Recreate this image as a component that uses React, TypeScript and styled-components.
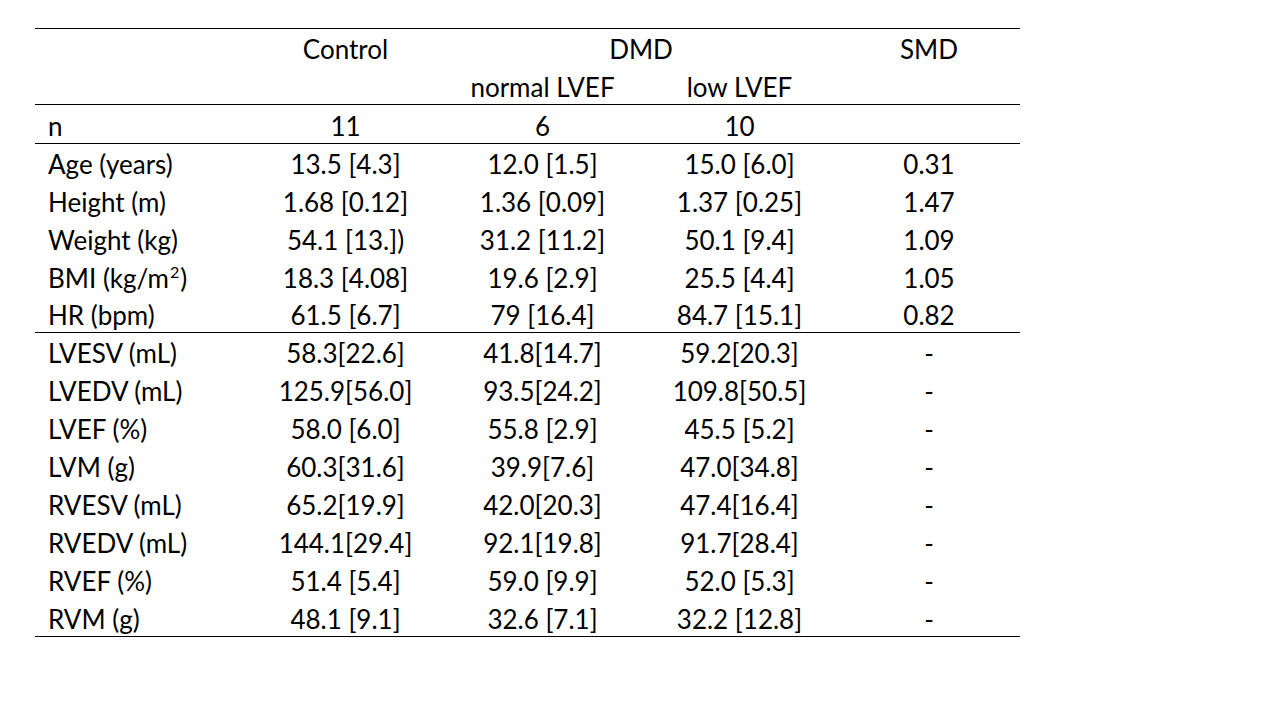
import React from "react";
import styled, { createGlobalStyle } from "styled-components";

const GlobalStyle = createGlobalStyle`
  html, body {
    margin: 0;
    padding: 0;
    background: #fff;
  }
  body {
    font-family: Lato, "Open Sans", "Liberation Sans", sans-serif;
    color: #000;
  }
`;

const Page = styled.div`
  padding: 28px 0 0 35px;
`;

const Table = styled.table`
  width: 985px;
  border-collapse: collapse;
  border-top: 1px solid #000;
  font-size: 26px;
  line-height: 1;
  table-layout: fixed;
`;

const Row = styled.tr<{ ruled?: boolean; h?: number }>`
  height: ${(p) => p.h ?? 38}px;
  border-bottom: ${(p) => (p.ruled ? "1px solid #000" : "none")};
`;

const Label = styled.td`
  padding: 3px 0 0 13px;
  text-align: left;
  white-space: nowrap;
`;

const Cell = styled.td`
  padding: 3px 0 0;
  text-align: center;
  white-space: nowrap;
`;

const Sup = styled.span`
  font-size: 0.62em;
  position: relative;
  top: -0.62em;
  margin: 0 1px;
`;

type DataRow = { label: React.ReactNode; values: string[]; smd: string };

const baseline: DataRow[] = [
  { label: "Age (years)", values: ["13.5 [4.3]", "12.0 [1.5]", "15.0 [6.0]"], smd: "0.31" },
  { label: "Height (m)", values: ["1.68 [0.12]", "1.36 [0.09]", "1.37 [0.25]"], smd: "1.47" },
  { label: "Weight (kg)", values: ["54.1 [13.])", "31.2 [11.2]", "50.1 [9.4]"], smd: "1.09" },
  {
    label: (
      <>
        BMI (kg/m<Sup>2</Sup>)
      </>
    ),
    values: ["18.3 [4.08]", "19.6 [2.9]", "25.5 [4.4]"],
    smd: "1.05",
  },
  { label: "HR (bpm)", values: ["61.5 [6.7]", "79 [16.4]", "84.7 [15.1]"], smd: "0.82" },
];

const cardiac: DataRow[] = [
  { label: "LVESV (mL)", values: ["58.3[22.6]", "41.8[14.7]", "59.2[20.3]"], smd: "-" },
  { label: "LVEDV (mL)", values: ["125.9[56.0]", "93.5[24.2]", "109.8[50.5]"], smd: "-" },
  { label: "LVEF (%)", values: ["58.0 [6.0]", "55.8 [2.9]", "45.5 [5.2]"], smd: "-" },
  { label: "LVM (g)", values: ["60.3[31.6]", "39.9[7.6]", "47.0[34.8]"], smd: "-" },
  { label: "RVESV (mL)", values: ["65.2[19.9]", "42.0[20.3]", "47.4[16.4]"], smd: "-" },
  { label: "RVEDV (mL)", values: ["144.1[29.4]", "92.1[19.8]", "91.7[28.4]"], smd: "-" },
  { label: "RVEF (%)", values: ["51.4 [5.4]", "59.0 [9.9]", "52.0 [5.3]"], smd: "-" },
  { label: "RVM (g)", values: ["48.1 [9.1]", "32.6 [7.1]", "32.2 [12.8]"], smd: "-" },
];

// last row of a block carries the rule; the baseline block is a pixel shorter
const renderRows = (rows: DataRow[], lastHeight = 38) =>
  rows.map((r, i) => {
    const last = i === rows.length - 1;
    return (
      <Row key={i} ruled={last} h={last ? lastHeight : 38}>
        <Label>{r.label}</Label>
        {r.values.map((v, j) => (
          <Cell key={j}>{v}</Cell>
        ))}
        <Cell>{r.smd}</Cell>
      </Row>
    );
  });

export default function App() {
  return (
    <Page>
      <GlobalStyle />
      <Table>
        <colgroup>
          <col style={{ width: 212 }} />
          <col style={{ width: 197 }} />
          <col style={{ width: 197 }} />
          <col style={{ width: 197 }} />
          <col style={{ width: 182 }} />
        </colgroup>
        <thead>
          <Row>
            <Label />
            <Cell>Control</Cell>
            <Cell colSpan={2}>DMD</Cell>
            <Cell>SMD</Cell>
          </Row>
          <Row ruled>
            <Label />
            <Cell />
            <Cell>normal LVEF</Cell>
            <Cell>low LVEF</Cell>
            <Cell />
          </Row>
        </thead>
        <tbody>
          <Row ruled h={39}>
            <Label>n</Label>
            <Cell>11</Cell>
            <Cell>6</Cell>
            <Cell>10</Cell>
            <Cell />
          </Row>
          {renderRows(baseline, 37)}
          {renderRows(cardiac)}
        </tbody>
      </Table>
    </Page>
  );
}
